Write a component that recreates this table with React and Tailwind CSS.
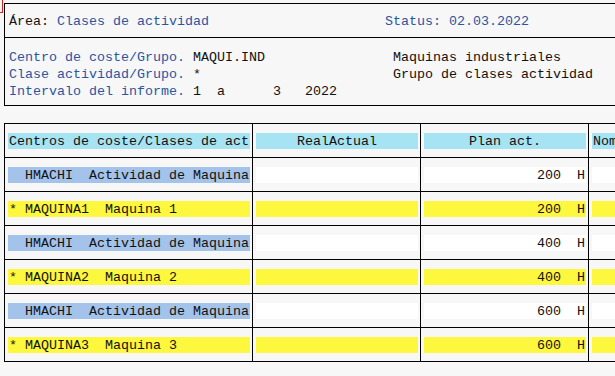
import React from 'react';

const rows = [
  { key: '  HMACHI  Actividad de Maquina', plan: '200  H', kind: 'group' },
  { key: '* MAQUINA1  Maquina 1', plan: '200  H', kind: 'item' },
  { key: '  HMACHI  Actividad de Maquina', plan: '400  H', kind: 'group' },
  { key: '* MAQUINA2  Maquina 2', plan: '400  H', kind: 'item' },
  { key: '  HMACHI  Actividad de Maquina', plan: '600  H', kind: 'group' },
  { key: '* MAQUINA3  Maquina 3', plan: '600  H', kind: 'item' },
];

// one cell of the list: a coloured band sitting inside a bordered box
const Cell = ({ width, band, align = 'left', children, last }) => (
  <div className={`${width} h-full shrink-0 pt-[9px] pl-[3px] pr-[2px] ${last ? '' : 'border-r border-black'}`}>
    <div
      className={`h-[16px] px-[1px] pt-[1px] overflow-hidden whitespace-pre leading-[16px] ${band} ${
        align === 'right' ? 'text-right' : align === 'center' ? 'text-center' : 'text-left'
      }`}
    >
      {children}
    </div>
  </div>
);

export default function App() {
  return (
    <div className="relative w-[615px] h-[376px] overflow-hidden bg-[#f7f7f7] font-['Liberation_Mono',monospace] text-[13.33px] leading-[16px] text-[#111]">
      {/* red corner mark */}
      <div className="absolute left-0 top-0 w-[3px] h-[13px] border-r border-b border-[#e0201a]" />

      <div className="pt-[3px] pl-[4px]">
        {/* Header block */}
        <div className="w-[720px] border border-r-0 border-black">
          <div className="h-[33px] pt-[10px] pl-[4px] whitespace-pre">
            <span>Área: </span>
            <span className="text-[#2a55a0]">Clases de actividad</span>
            <span>{'                      '}</span>
            <span className="text-[#2a55a0]">Status: 02.03.2022</span>
          </div>
          <div className="h-[68px] border-t border-black pt-[11px] pl-[4px] leading-[17px] whitespace-pre">
            <div>
              <span className="text-[#2a55a0]">Centro de coste/Grupo. </span>
              <span>MAQUI.IND</span>
              <span>{'                '}</span>
              <span>Maquinas industriales</span>
            </div>
            <div>
              <span className="text-[#2a55a0]">Clase actividad/Grupo. </span>
              <span>*</span>
              <span>{'                        '}</span>
              <span>Grupo de clases actividad</span>
            </div>
            <div>
              <span className="text-[#2a55a0]">Intervalo del informe. </span>
              <span>{'1  a      3   2022'}</span>
            </div>
          </div>
        </div>

        {/* List */}
        <div className="mt-[17px] w-[720px] border-t border-l border-black">
          <div className="flex h-[34px] border-b border-black">
            <Cell width="w-[248px]" band="bg-[#a6e3f3]">Centros de coste/Clases de act</Cell>
            <Cell width="w-[168px]" band="bg-[#a6e3f3]" align="center">RealActual</Cell>
            <Cell width="w-[168px]" band="bg-[#a6e3f3]" align="center">Plan act.</Cell>
            <Cell width="w-[168px]" band="bg-[#a6e3f3]">Nominal actual act.</Cell>
          </div>
          {rows.map((r, i) => {
            const item = r.kind === 'item';
            const val = item ? 'bg-[#fdf73d]' : 'bg-white';
            return (
              <div key={i} className="flex h-[34px] border-b border-black">
                <Cell width="w-[248px]" band={item ? 'bg-[#fdf73d]' : 'bg-[#a3c3ea]'}>
                  {r.key}
                </Cell>
                <Cell width="w-[168px]" band={val}>{''}</Cell>
                <Cell width="w-[168px]" band={val} align="right">{r.plan}</Cell>
                <Cell width="w-[168px]" band={val}>{''}</Cell>
              </div>
            );
          })}
        </div>
      </div>
    </div>
  );
}
